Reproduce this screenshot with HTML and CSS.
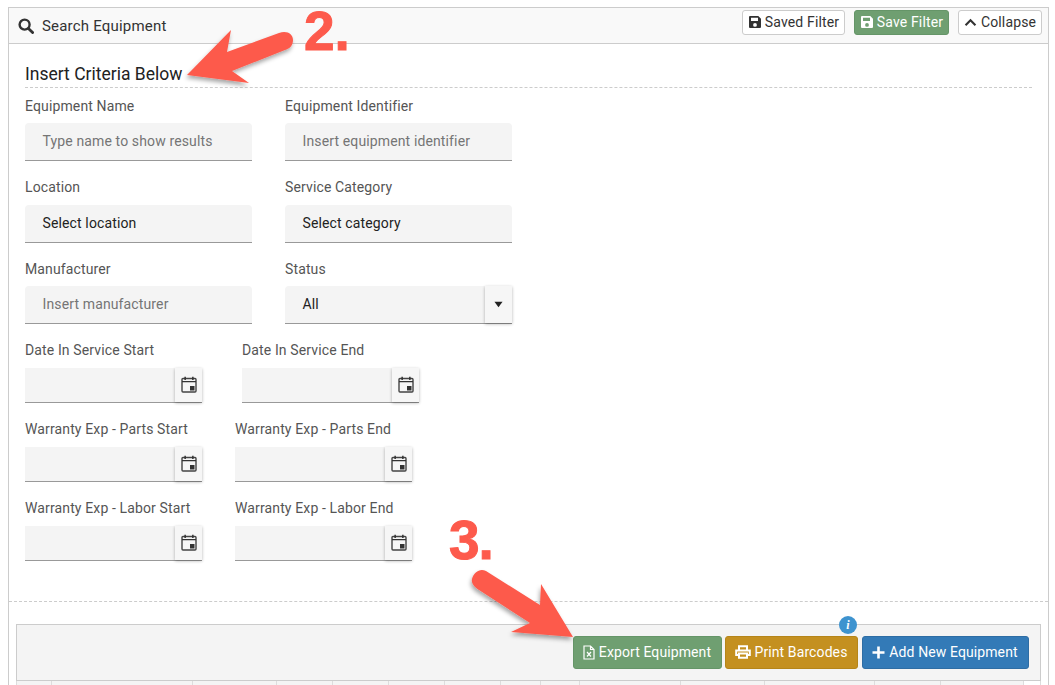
FILE: index.html
```html
<!DOCTYPE html>
<html lang="en">
<head>
<meta charset="utf-8">
<title>Search Equipment</title>
<link rel="stylesheet" href="styles.css">
</head>
<body>
<section class="panel">
  <header class="panel-head">
    <div class="panel-title">
      <svg class="ico-search" viewBox="0 0 16 16"><circle cx="6.600" cy="6.600" r="5" fill="none" stroke="#333" stroke-width="2.400"/><path d="M10.400 10.400 14.600 14.600" stroke="#333" stroke-width="2.800" stroke-linecap="round"/></svg>
      <span>Search Equipment</span>
    </div>
    <div class="head-actions">
      <button class="btn btn-light saved"><svg class="ico-save" viewBox="0 0 14 14"><path fill="currentColor" fill-rule="evenodd" d="M2 1h8.300L13 3.700V12a1 1 0 0 1-1 1H2a1 1 0 0 1-1-1V2a1 1 0 0 1 1-1Zm1 1.800V6h7V2.800ZM7 8a1.900 1.900 0 1 0 0 3.800A1.900 1.900 0 0 0 7 8Z"/></svg>Saved Filter</button>
      <button class="btn btn-sage save"><svg class="ico-save" viewBox="0 0 14 14"><path fill="currentColor" fill-rule="evenodd" d="M2 1h8.300L13 3.700V12a1 1 0 0 1-1 1H2a1 1 0 0 1-1-1V2a1 1 0 0 1 1-1Zm1 1.800V6h7V2.800ZM7 8a1.900 1.900 0 1 0 0 3.800A1.900 1.900 0 0 0 7 8Z"/></svg>Save Filter</button>
      <button class="btn btn-light collapse"><svg class="ico-chev" viewBox="0 0 14 10"><path d="M1.500 8 7 2.500 12.500 8" fill="none" stroke="currentColor" stroke-width="2.300"/></svg>Collapse</button>
    </div>
  </header>

  <div class="panel-body">
    <h2 class="section-title">Insert Criteria Below</h2>

    <div class="row">
      <div class="field"><label>Equipment Name</label><div class="input placeholder">Type name to show results</div></div>
      <div class="field"><label>Equipment Identifier</label><div class="input placeholder">Insert equipment identifier</div></div>
    </div>
    <div class="row">
      <div class="field"><label>Location</label><div class="input">Select location</div></div>
      <div class="field"><label>Service Category</label><div class="input">Select category</div></div>
    </div>
    <div class="row">
      <div class="field"><label>Manufacturer</label><div class="input placeholder">Insert manufacturer</div></div>
      <div class="field"><label>Status</label>
        <div class="input select"><span class="select-value">All</span><span class="addon"><svg class="ico-caret" viewBox="0 0 10 7"><path d="M0.500 0.500h9L5 6.500Z" fill="#222"/></svg></span></div>
      </div>
    </div>

    <div class="date-row first">
      <div class="date-field"><label>Date In Service Start</label><div class="date-input"><span class="addon"><svg class="ico-cal" viewBox="0 0 16 17"><use href="#cal"/></svg></span></div></div>
      <div class="date-field"><label>Date In Service End</label><div class="date-input"><span class="addon"><svg class="ico-cal" viewBox="0 0 16 17"><use href="#cal"/></svg></span></div></div>
    </div>
    <div class="date-row">
      <div class="date-field"><label>Warranty Exp - Parts Start</label><div class="date-input"><span class="addon"><svg class="ico-cal" viewBox="0 0 16 17"><use href="#cal"/></svg></span></div></div>
      <div class="date-field"><label>Warranty Exp - Parts End</label><div class="date-input"><span class="addon"><svg class="ico-cal" viewBox="0 0 16 17"><use href="#cal"/></svg></span></div></div>
    </div>
    <div class="date-row">
      <div class="date-field"><label>Warranty Exp - Labor Start</label><div class="date-input"><span class="addon"><svg class="ico-cal" viewBox="0 0 16 17"><use href="#cal"/></svg></span></div></div>
      <div class="date-field"><label>Warranty Exp - Labor End</label><div class="date-input"><span class="addon"><svg class="ico-cal" viewBox="0 0 16 17"><use href="#cal"/></svg></span></div></div>
    </div>
  </div>

  <div class="results">
    <div class="toolbar">
      <button class="btn btn-sage big export"><svg class="ico-file" viewBox="0 0 12 15"><path d="M1 1h6.500L11 4.500V14H1Z M7.500 1v3.500H11" fill="none" stroke="currentColor" stroke-width="1.200"/><path d="M4 7l4 4.500M8 7l-4 4.500" stroke="currentColor" stroke-width="1.200"/></svg>Export Equipment</button>
      <div class="print-wrap">
        <span class="info-badge">i</span>
        <button class="btn btn-gold big"><svg class="ico-print" viewBox="0 0 16 14"><path fill="none" stroke="currentColor" stroke-width="2" d="M4 5V1.200h8V5M4 10H1.200V5.500h13.600V10H12M4 8.500h8v4.300H4Z"/></svg>Print Barcodes</button>
      </div>
      <button class="btn btn-blue big"><svg class="ico-plus" viewBox="0 0 13 13"><path d="M6.500 0.500v12M0.500 6.500h12" stroke="currentColor" stroke-width="2.600"/></svg>Add New Equipment</button>
    </div>
    <div class="thead">
      <span></span><span></span><span></span><span></span><span></span><span></span><span></span><span></span><span></span><span></span><span></span><span></span><span></span><span></span><span class="last"></span>
    </div>
  </div>
</section>

<div class="annot two">2.</div>
<svg class="arrow arrow-two" viewBox="0 0 130 70">
  <defs><filter id="sh" x="-20%" y="-20%" width="140%" height="140%"><feDropShadow dx="-1" dy="3" stdDeviation="2" flood-color="#000" flood-opacity=".35"/></filter></defs>
  <path filter="url(#sh)" fill="#fd5a4c" d="M0 50 44 5 40 27 92 8C100 5 106 9 106 15 106 21 102 24 98 25L45 46 62 58Z"/>
</svg>
<div class="annot three">3.</div>
<svg class="arrow arrow-three" viewBox="0 0 130 90">
  <path filter="url(#sh)" fill="#fd5a4c" d="M102 72 40 67 59 58 8 25C3 22 0 18 1 14 3 7 9 3 15 6L69 40 70 19Z"/>
</svg>

<svg class="defs" width="0" height="0" aria-hidden="true"><symbol id="cal" viewBox="0 0 16 17"><rect x="1" y="2.500" width="14" height="13.500" rx="1" fill="none" stroke="#444" stroke-width="1.400"/><path fill="#333" d="M1 5h14v1.300H1ZM3.400 0.800h1.500v3.200H3.400ZM11.100 0.800h1.500v3.200H11.100ZM9 10h4.500v4.500H9Z"/></symbol></svg>
</body>
</html>
```
FILE: styles.css
```css
* { box-sizing: border-box; }
html, body { margin: 0; padding: 0; background: #fff; }
body {
  position: relative;
  width: 1055px;
  height: 685px;
  overflow: hidden;
  font-family: Roboto, "Liberation Sans", sans-serif;
  color: #333;
  padding: 7px 6px 0 8px;
}
.panel {
  border: 1px solid #ccc;
  border-bottom: 0;
  height: 678px;
  overflow: hidden;
}
.panel-head {
  height: 36px;
  background: #f9f9f9;
  border-bottom: 1px solid #ccc;
  display: flex;
  align-items: center;
  justify-content: space-between;
  padding: 0 6px 0 9px;
}
.panel-title { display: flex; align-items: center; gap: 8px; font-size: 15px; letter-spacing: .2px; color: #333; }
.ico-search { width: 16px; height: 16px; }
.head-actions { display: flex; gap: 9px; margin-top: -6px; }
.btn {
  font-family: inherit;
  display: inline-flex;
  align-items: center;
  justify-content: center;
  border-radius: 3px;
  cursor: pointer;
  padding: 0 0 1px;
}
.btn-light { background: #fff; border: 1px solid #ccc; color: #333; }
.btn-sage { background: #6f9f71; border: 1px solid #659568; color: #fff; }
.btn-gold { background: #c49020; border: 1px solid #b58519; color: #fff; }
.btn-blue { background: #337ab7; border: 1px solid #2e6da4; color: #fff; }
.head-actions .btn { height: 25px; font-size: 14px; letter-spacing: .15px; gap: 3px; }
.saved { width: 103px; }
.save { width: 95px; }
.collapse { width: 84px; }
.ico-save { width: 14px; height: 14px; }
.ico-chev { width: 13px; height: 9px; margin-right: 1px; }

.panel-body { height: 558px; padding: 20px 16px 0; border-bottom: 1px dashed #ccc; }
.section-title {
  margin: 0;
  font-weight: 400;
  font-size: 17.500px;
  line-height: 21px;
  height: 24px;
  color: #222;
  border-bottom: 1px dashed #ccc;
}
.row { display: flex; gap: 33px; height: 81.500px; }
.field { width: 227px; padding-top: 9.500px; }
label { display: block; font-size: 14px; letter-spacing: .13px; line-height: 17px; color: #555; }
.input {
  margin-top: 8.500px;
  width: 227px;
  height: 38px;
  background: #f4f4f4;
  border-bottom: 1px solid #999;
  border-radius: 4px 4px 0 0;
  display: flex;
  align-items: center;
  padding: 0 0 1px 17.500px;
  font-size: 14px;
  letter-spacing: .13px;
  color: #222;
}
.input.placeholder { color: #757575; }
.select { justify-content: space-between; padding-bottom: 0; }
.select-value { margin-bottom: 2px; }
.addon {
  background: #f6f6f6;
  box-shadow: 0 1px 3px rgba(0,0,0,.3);
  display: flex;
  align-items: center;
  justify-content: center;
  flex: none;
  width: 27px;
  height: 100%;
}
.ico-caret { width: 9px; height: 7px; }
.date-row { display: flex; gap: 33px; height: 79px; }
.date-row.first { gap: 40px; margin-top: -1px; }
.date-field { width: 177px; padding-top: 10px; }
.date-input {
  margin-top: 9px;
  width: 177px;
  height: 35px;
  background: #f4f4f4;
  border-bottom: 1px solid #999;
  display: flex;
  justify-content: flex-end;
}
.ico-cal { width: 16px; height: 17px; }

.results { padding: 22px 7px 0 7px; }
.toolbar {
  height: 57px;
  background: #f4f4f4;
  border: 1px solid #ccc;
  display: flex;
  align-items: flex-start;
  justify-content: flex-end;
  gap: 4px;
  padding: 11px 11px 0 0;
}
.big { height: 33px; font-size: 14px; letter-spacing: .1px; gap: 4px; padding-right: 1px; }
.export { width: 149px; margin-right: -1px; }
.btn-gold { width: 133px; }
.btn-blue { width: 167px; }
.print-wrap { position: relative; }
.info-badge {
  position: absolute;
  top: -20px;
  left: 114px;
  width: 18px;
  height: 18px;
  border-radius: 50%;
  background: #3e93cf;
  color: #fff;
  font-family: "Liberation Serif", serif;
  font-style: italic;
  font-weight: 700;
  font-size: 12px;
  line-height: 18px;
  text-align: center;
}
.ico-file { width: 12px; height: 15px; }
.ico-print { width: 16px; height: 14px; }
.ico-plus { width: 13px; height: 13px; }
.thead {
  display: grid;
  grid-template-columns: 35px 141px 84px 56px 56px 56px 56px 40px 39px 101px 84px 110px 66px 83px 1fr;
  height: 10px;
  border: 1px solid #ddd;
  border-top: 0;
  background: #f4f4f4;
}
.thead span { border-right: 1px solid #ddd; }
.thead .last { background: #fff; border-right: 0; }

.annot {
  position: absolute;
  font-family: "Liberation Sans", sans-serif;
  font-weight: 700;
  color: #fd5a4c;
  font-size: 55px;
  line-height: 1;
  -webkit-text-stroke: 1px #fd5a4c;
}
.two { left: 304px; top: 4px; }
.three { left: 449px; top: 513px; letter-spacing: -1px; }
.arrow { position: absolute; overflow: visible; }
.arrow-two { left: 187px; top: 25px; width: 130px; height: 70px; }
.arrow-three { left: 471px; top: 565px; width: 130px; height: 90px; }
.defs { position: absolute; }
```
